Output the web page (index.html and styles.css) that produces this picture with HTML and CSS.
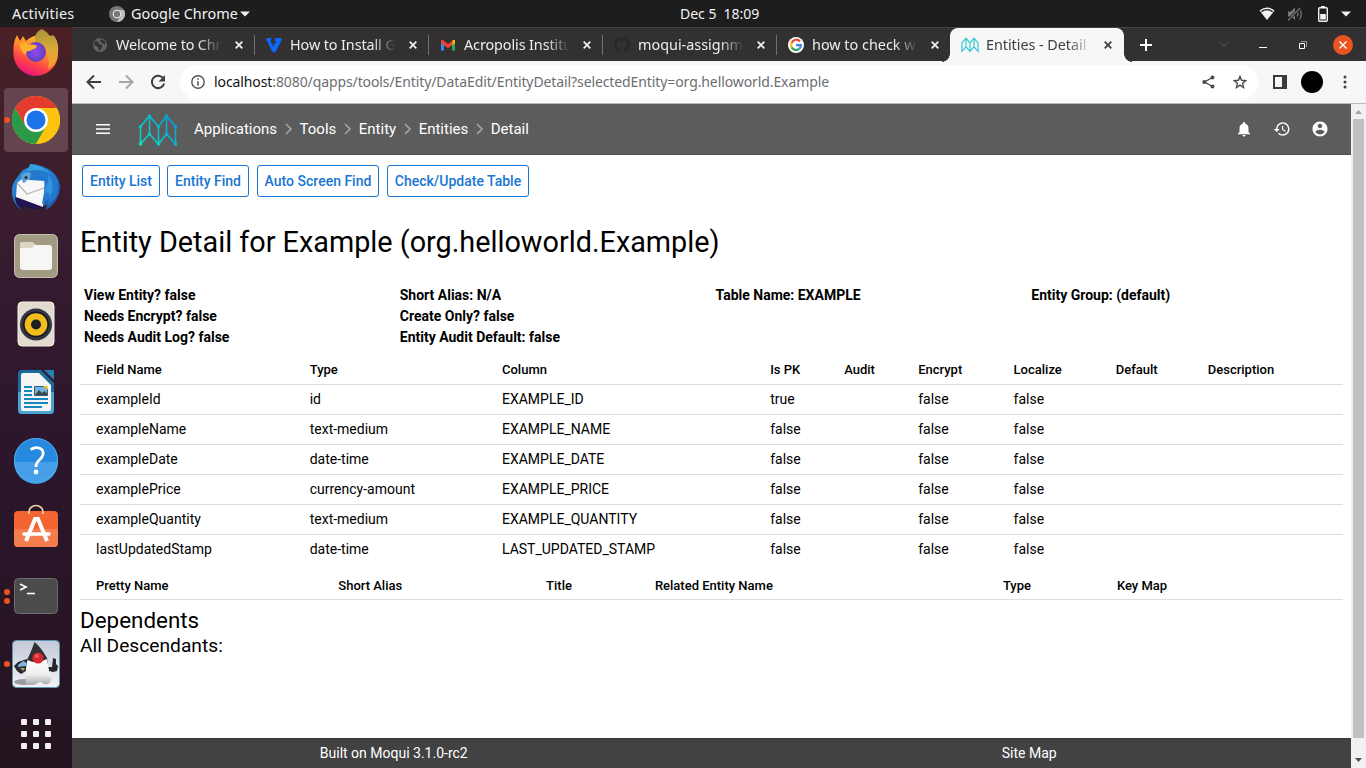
FILE: index.html
```html
<!DOCTYPE html>
<html lang="en">
<head>
<meta charset="utf-8">
<title>Entities - Detail</title>
<link rel="stylesheet" href="styles.css">
</head>
<body>
<div class="desktop">
  <header class="topbar">
    <span class="activities">Activities</span>
    <svg class="app-ico" width="16" height="16" viewBox="0 0 16 16"><circle cx="8" cy="8" r="8" fill="#777"/><path d="M8 4h7a8 8 0 0 1-7 12l3.5-6z" fill="#bdbdbd"/><circle cx="8" cy="8" r="4.3" fill="#eee"/><circle cx="8" cy="8" r="3.2" fill="#777"/></svg>
    <span class="app-name">Google Chrome</span>
    <svg class="app-caret" width="10" height="6" viewBox="0 0 10 6"><path d="M0 .5h10L5 5.5z" fill="#f2f2f2"/></svg>
    <span class="clock">Dec 5&nbsp; 18:09</span>
    <div class="tray">
      <svg width="16" height="14" viewBox="0 0 16 14"><path d="M.5 3.6Q8-2.6 15.500 3.600L8 13z" fill="#f2f2f2"/><path d="M2.400 4.600Q8 .6 13.600 4.600" fill="none" stroke="#1d1d1d" stroke-width="1.300"/></svg>
      <svg width="16" height="14" viewBox="0 0 16 14" fill="none" stroke="#777" stroke-width="1.300"><path d="M1 4.500h3l4-4v12.500L4 9.500H1z" fill="#777" stroke="none"/><path d="M10 4.500q2 2.500 0 5M12.500 2q3.500 5 0 10.500"/><path d="M1 13.500L13 1" stroke="#1d1d1d" stroke-width="2.600"/><path d="M1 13.500L13 1" stroke-width="1.100"/></svg>
      <svg width="10" height="16" viewBox="0 0 10 16"><path d="M3 0h4v2H3z" fill="#f2f2f2"/><rect x=".7" y="1.700" width="8.600" height="13.600" rx="1" fill="none" stroke="#f2f2f2" stroke-width="1.400"/><path d="M2.200 8h5.600v5.500H2.200z" fill="#f2f2f2"/></svg>
      <svg width="10" height="6" viewBox="0 0 10 6"><path d="M0 .5h10L5 5.500z" fill="#f2f2f2"/></svg>
    </div>
  </header>

  <div class="workspace">
    <nav class="dock">
      <div class="app"><svg width="48" height="48" viewBox="0 0 48 48">
        <defs><linearGradient id="ff" x1=".8" y1="0" x2=".3" y2="1"><stop offset="0" stop-color="#ffc43a"/><stop offset=".45" stop-color="#ff8a2a"/><stop offset=".72" stop-color="#ff404a"/><stop offset="1" stop-color="#e5127c"/></linearGradient><linearGradient id="fl" x1="0" y1="0" x2="0" y2="1"><stop offset="0" stop-color="#a8923a"/><stop offset=".5" stop-color="#d9ab38"/><stop offset="1" stop-color="#ff9a30"/></linearGradient><radialGradient id="fp"><stop offset="0" stop-color="#8e4cf0"/><stop offset="1" stop-color="#6540bd"/></radialGradient></defs>
        <path d="M5 7l3 6 3-5 3 5c5-5 12-7 18-4l10-1c3 4 5 10 4 16A22.300 22.300 0 0 1 1.500 27C1 19 2 12 5 7z" fill="url(#ff)"/>
        <path d="M30 1c3 2 5 3 8 7l3-1c5 6 6 15 4 22-1 6-5 10-9 12 2-8 1-18-4-24-3-2-7-3-9-4C22 8 25 3 30 1z" fill="url(#fl)"/>
        <circle cx="24" cy="24" r="10" fill="url(#fp)"/>
        <path d="M8 16c3-1 7-1 9 1 4-1 7 0 8 1-1 4-6 3-7 5-4 0-4 1-4 4-4-2-6-7-6-11z" fill="#ffb02e"/></svg></div>
      <div class="app app-current"><i class="run"></i><svg width="48" height="48" viewBox="0 0 48 48"><circle cx="24" cy="24" r="24" fill="#fbc116"/><path d="M24 12h20.800A24 24 0 0 0 3.200 12l10.400 18z" fill="#e33b2e"/><path d="M3.200 12A24 24 0 0 0 24 48l10.400-18H13.600z" fill="#2b9a48"/><path d="M34.400 30L24 48a24 24 0 0 0 20.800-36H24z" fill="#fdc40f"/><circle cx="24" cy="24" r="12" fill="#fff"/><circle cx="24" cy="24" r="9.500" fill="#1a73e8"/></svg></div>
      <div class="app"><svg width="48" height="48" viewBox="0 0 48 48">
        <defs><linearGradient id="tb" x1="0" y1="0" x2="1" y2="1"><stop offset="0" stop-color="#2f8fd6"/><stop offset=".6" stop-color="#1f6fc4"/><stop offset="1" stop-color="#2450a8"/></linearGradient></defs>
        <path d="M18 0c14 1 28 7 30 22 0 11-6 19-14 24l1-6-4 3 1-6L6 32l4 14C2 42-1 32 0 24c1-6 4-9 7-13 3-5 6-7 13-8z" fill="url(#tb)"/>
        <path d="M3 33l27 7 3 3c-3 0-6 2-10 2-4-1-8-1-11-4l-1 5C6 44 3 38 3 33z" fill="#201552"/>
        <path d="M5 19l6-5 7 2 15 1-2 26L4 33z" fill="#f8f8f8"/>
        <path d="M5 19l10 11 17-6" fill="none" stroke="#b4b4b4" stroke-width="1.200"/>
        <path d="M18 16c5-2 10-2 14 1 2 7-1 16-2 23l7-6-1 7 7-7c6-9 3-21-4-27-8-5-19-4-25 2z" fill="#2478cd"/>
        <path d="M34 22c3-4 3-7 2-11 6 6 6 15 1 23 1-6 0-7-4-4z" fill="#3395e2"/>
        <path d="M18 0c9 1 17 5 21 11-7-6-16-6-24-3z" fill="#35a0de"/>
        <path d="M9 13c1-4 5-6 10-4l-1 6c-3 0-4 4-7 4z" fill="#5aa4dc"/><circle cx="14" cy="13.500" r="1.500" fill="#3a2a22"/></svg></div>
      <div class="app"><svg width="48" height="48" viewBox="0 0 48 48"><rect x="2.500" y="2.500" width="43" height="43" rx="5" fill="#a39a83" stroke="#c5beac"/><path d="M8 13q0-3 3-3h9l4 3h13q3 0 3 3v19q0 3-3 3H11q-3 0-3-3z" fill="#f7f6f5"/><path d="M8 14v-1q0-3 3-3h9l3 3-3 3H8z" fill="#ddd5c6"/></svg></div>
      <div class="app"><svg width="48" height="48" viewBox="0 0 48 48"><rect x="6" y="2" width="36" height="44" rx="4" fill="#e1dccf" stroke="#f1ede4"/><circle cx="24" cy="24.500" r="16" fill="#343743"/><circle cx="24" cy="24.500" r="13" fill="#161920"/><circle cx="24" cy="24.500" r="11.300" fill="#f1bd1c"/><circle cx="24" cy="24.500" r="5" fill="#1c1e25"/></svg></div>
      <div class="app"><svg width="48" height="48" viewBox="0 0 48 48"><path d="M10 2h19l13 13v27q0 4-4 4H10q-4 0-4-4V6q0-4 4-4z" fill="#1c6b9c"/><path d="M6 24h36v18q0 4-4 4H10q-4 0-4-4z" fill="#4da3cf"/><path d="M32 2h10v10z" fill="#2581b5"/><path d="M11 5h16l12 12v24q0 2-2 2H11q-2 0-2-2V7q0-2 2-2z" fill="#f5f5f5"/><path d="M12 19h8M12 23h8M12 27h8M12 31h24M12 35h24M12 39h18" stroke="#1985bd" stroke-width="2"/><path d="M22.500 18.500h13v9h-13z" fill="#73b4dc" stroke="#246383"/><path d="M23 27l4-5 3 3 3-2 3 4z" fill="#444"/><path d="M31 18h5v4z" fill="#f8c528"/></svg></div>
      <div class="app"><svg width="48" height="48" viewBox="0 0 48 48"><circle cx="24" cy="24" r="22" fill="#2589df"/><path d="M2 26h44a22 22 0 0 1-44 0z" fill="#469ee7"/><circle cx="24" cy="24" r="21.500" fill="none" stroke="#4dadf0"/><path d="M18.500 13.500c7-4 13.500-1 12.500 5-1 6-7 5-7 12.500" fill="none" stroke="#fff" stroke-width="2.800"/><circle cx="24" cy="36" r="2.400" fill="#fff"/></svg></div>
      <div class="app"><svg width="48" height="48" viewBox="0 0 48 48"><rect x="2" y="7" width="44" height="36" rx="4" fill="#f26432"/><path d="M2 25h44v14q0 4-4 4H6q-4 0-4-4z" fill="#f47d4d"/><path d="M17 10V8a7 6.500 0 0 1 14 0v2" fill="none" stroke="#edd5a5" stroke-width="1.700"/><path d="M14 37l9-22h3l9 22" fill="none" stroke="#fff" stroke-width="4"/><path d="M12 30h25" stroke="#fff" stroke-width="3.600" stroke-linecap="round"/></svg></div>
      <div class="app"><i class="run run-hi"></i><i class="run run-lo"></i><svg width="48" height="48" viewBox="0 0 48 48"><rect x="2.500" y="6.500" width="43" height="35" rx="4" fill="#4b4b4b" stroke="#6d6d6d"/><path d="M8 12l6 3-6 3" fill="none" stroke="#fff" stroke-width="1.700"/><path d="M15 21.500h8" stroke="#fff" stroke-width="1.600"/></svg></div>
      <div class="app"><i class="run"></i><svg width="48" height="48" viewBox="0 0 48 48"><defs><linearGradient id="dk" x1="0" y1="0" x2="0" y2="1"><stop offset="0" stop-color="#c3c9d8"/><stop offset="1" stop-color="#f2f2f6"/></linearGradient><linearGradient id="du" x1="0" y1="0" x2="0" y2="1"><stop offset="0" stop-color="#fff"/><stop offset=".6" stop-color="#eee"/><stop offset="1" stop-color="#a9a9a9"/></linearGradient></defs><rect x=".5" y=".5" width="47" height="47" rx="4" fill="url(#dk)" stroke="#5b94ab"/><ellipse cx="12" cy="42" rx="10" ry="3" fill="#9a9aa0"/><path d="M2 26l4-4 9-3 1 5-2 7-5 3-4-3z" fill="#2b2b2b"/><path d="M6 25l5-4 4 2-1 3-8 1z" fill="#7cb4e4"/><path d="M8 28h5l-2 3z" fill="#b89a74"/><path d="M36 27h4l1-9 3 1v5l2 2-1 5-4 1-4-1z" fill="#292929"/><path d="M22.500 2c5 4 9 10 12.500 16l1 10-22 1 1-9c3-6 5-11 7.500-18z" fill="#303030"/><path d="M15.500 20q10 5 19-1c2 6 2 13 5 20-1 5-6 7-9 4-2-2-4-1-6 1-4 2-8 1-11-1 0-8 0-16 2-23z" fill="url(#du)"/><circle cx="26" cy="18" r="5.600" fill="#d82733"/><circle cx="25" cy="16" r="2" fill="#ef5a60"/></svg></div>
      <div class="app app-grid"><svg width="30" height="30" viewBox="0 0 30 30" fill="#f0efed"><rect width="6" height="6" rx="1"/><rect x="12" width="6" height="6" rx="1"/><rect x="24" width="6" height="6" rx="1"/><rect y="12" width="6" height="6" rx="1"/><rect x="12" y="12" width="6" height="6" rx="1"/><rect x="24" y="12" width="6" height="6" rx="1"/><rect y="24" width="6" height="6" rx="1"/><rect x="12" y="24" width="6" height="6" rx="1"/><rect x="24" y="24" width="6" height="6" rx="1"/></svg></div>
    </nav>

    <div class="window">
      <div class="tabs">
        <div class="tab"><svg width="16" height="16" viewBox="0 0 16 16"><circle cx="8" cy="8" r="7" fill="#5f6368"/><path d="M3 4q4 0 4 3l3 1v3l-3 3-1-4-4-2zM9 2l4 2v4l-3-2-2-2z" fill="#333031"/></svg><span class="t1">Welcome to Chr</span><svg class="x" width="8" height="8" viewBox="0 0 8 8"><path d="M.7.7l6.600 6.600M7.300.7L.7 7.300"/></svg></div>
        <div class="tab"><svg width="16" height="16" viewBox="0 0 16 16"><path d="M1.500 1h4l-1 5 2 0 0 4 4-6H8.500l1-3h5q1.500 0 1 2l-5.500 11q-2 3-4 0L.5 3q-.5-2 1-2z" fill="#0a69ff"/></svg><span class="t2">How to Install G</span><svg class="x" width="8" height="8" viewBox="0 0 8 8"><path d="M.7.7l6.600 6.600M7.300.7L.7 7.300"/></svg></div>
        <div class="tab"><svg width="16" height="16" viewBox="0 0 16 16"><path d="M1 4v9.500h3V6z" fill="#4285f4"/><path d="M15 4v9.500h-3V6z" fill="#34a853"/><path d="M12 4l1.500-1.200Q15 2.500 15 4v2l-3 2.200z" fill="#fbbc04"/><path d="M1 6V4q0-1.500 1.500-1.200L8 7l5-3.800-1 5-4 3-4-3z" fill="#ea4335"/></svg><span class="t3">Acropolis Institu</span><svg class="x" width="8" height="8" viewBox="0 0 8 8"><path d="M.7.7l6.600 6.600M7.300.7L.7 7.300"/></svg></div>
        <div class="tab"><svg width="16" height="16" viewBox="0 0 16 16"><path fill="#24292f" d="M8 0C3.580 0 0 3.580 0 8c0 3.540 2.290 6.530 5.470 7.590.4.070.55-.17.55-.38v-1.490c-2.010.37-2.530-.49-2.690-.94-.09-.23-.48-.94-.82-1.130-.28-.15-.68-.52-.01-.53.63-.01 1.080.58 1.230.82.72 1.210 1.870.87 2.330.66.070-.52.28-.87.51-1.070-1.780-.2-3.640-.89-3.640-3.950 0-.87.31-1.590.82-2.150-.08-.2-.36-1.020.08-2.120 0 0 .67-.21 2.200.82a7.500 7.500 0 0 1 4 0c1.530-1.040 2.200-.82 2.200-.82.44 1.100.16 1.920.08 2.120.51.56.82 1.270.82 2.150 0 3.070-1.870 3.750-3.650 3.950.29.25.54.73.54 1.480v2.200c0 .21.15.46.55.38A8 8 0 0 0 16 8c0-4.420-3.580-8-8-8z"/></svg><span class="t4">moqui-assignm</span><svg class="x" width="8" height="8" viewBox="0 0 8 8"><path d="M.7.7l6.600 6.600M7.300.7L.7 7.300"/></svg></div>
        <div class="tab last"><svg width="16" height="16" viewBox="0 0 16 16"><circle cx="8" cy="8" r="8" fill="#fff"/><g fill="none" stroke-width="2.200"><path d="M12 4.500A5 5 0 0 0 3.600 5.700" stroke="#ea4335"/><path d="M3.600 5.700a5 5 0 0 0 0 4.600" stroke="#fbbc05"/><path d="M3.600 10.300a5 5 0 0 0 7.400 1.700" stroke="#34a853"/><path d="M11 12a5 5 0 0 0 1.900-3.800H8" stroke="#4285f4"/></g></svg><span class="t5">how to check w</span><svg class="x" width="8" height="8" viewBox="0 0 8 8"><path d="M.7.7l6.600 6.600M7.300.7L.7 7.300"/></svg></div>
        <div class="tab active"><svg width="18" height="16" viewBox="0 0 40 32" fill="none" stroke="#28c5d3" stroke-width="2.500"><path d="M2 30V12L11 1l9 11 9-11 9 11v18L29 20l-9 10-9-10zM11 1v19M20 12v18M29 1v19"/></svg><span class="t6">Entities - Detail</span><svg class="x" width="8" height="8" viewBox="0 0 8 8"><path d="M.7.7l6.600 6.600M7.300.7L.7 7.300"/></svg></div>
        <svg class="plus" width="12" height="12" viewBox="0 0 12 12"><path d="M6 0v12M0 6h12" stroke="#fff" stroke-width="2"/></svg>
        <div class="controls">
          <svg width="10" height="6" viewBox="0 0 10 6"><path d="M1 .5l4 4 4-4" fill="none" stroke="#484446" stroke-width="1.500"/></svg>
          <svg width="8" height="8" viewBox="0 0 8 8"><path d="M0 6.500h8" stroke="#fff"/></svg>
          <svg width="8" height="8" viewBox="0 0 8 8" fill="none"><path d="M2 .5h5.500V6" stroke="#999"/><path d="M.5 2.500h5v5h-5z" stroke="#fff"/></svg>
          <svg width="20" height="20" viewBox="0 0 20 20"><circle cx="10" cy="10" r="10" fill="#e95420"/><path d="M6.500 6.500l7 7M13.500 6.500l-7 7" stroke="#fff" stroke-width="1.400"/></svg>
        </div>
      </div>

      <div class="toolbar">
        <svg width="16" height="16" viewBox="0 0 16 16" fill="none" stroke="#3c4043" stroke-width="2"><path d="M15 8H2M8 1.500L1.500 8 8 14.500"/></svg>
        <svg width="16" height="16" viewBox="0 0 16 16" fill="none" stroke="#a6a6a6" stroke-width="2"><path d="M1 8h13M8 1.500L14.500 8 8 14.500"/></svg>
        <svg width="16" height="16" viewBox="0 0 16 16" fill="none" stroke="#3c4043" stroke-width="2"><path d="M13.300 4.500a6.200 6.200 0 1 0 .8 5"/><path d="M15 1v6.500H8.500z" fill="#3c4043" stroke="none"/></svg>
        <div class="omnibox">
          <svg width="14" height="14" viewBox="0 0 14 14" fill="none" stroke="#505458" stroke-width="1.400"><circle cx="7" cy="7" r="6.200"/><path d="M7 6.200v4.300M7 3.300v1.500" stroke-width="1.600"/></svg>
          <span class="url"><b>localhost</b>:8080/qapps/tools/Entity/DataEdit/EntityDetail?selectedEntity=org.helloworld.Example</span>
          <svg class="share" width="13" height="14" viewBox="0 0 13 14" fill="#484b4e"><path d="M10.500 2.500L2.500 7l8 4.500" fill="none" stroke="#484b4e" stroke-width="1.400"/><circle cx="10.500" cy="2.500" r="2"/><circle cx="2.300" cy="7" r="2"/><circle cx="10.500" cy="11.500" r="2"/></svg>
          <svg class="star" width="14" height="14" viewBox="0 0 14 14"><path d="M7 1.400l1.600 3.900 4.200.3-3.200 2.700 1 4.200L7 10.200l-3.600 2.300 1-4.200L1.200 5.600l4.200-.3z" fill="none" stroke="#484b4e" stroke-width="1.400"/></svg>
        </div>
        <svg class="panel" width="14" height="14" viewBox="0 0 14 14"><path d="M0 0h14v14H0z" fill="#3b3b3e"/><path d="M2 2h7v10H2z" fill="#f7f7f7"/></svg>
        <i class="avatar"></i>
        <svg class="dots" width="4" height="14" viewBox="0 0 4 14" fill="#3c4043"><circle cx="2" cy="2" r="1.500"/><circle cx="2" cy="7" r="1.500"/><circle cx="2" cy="12" r="1.500"/></svg>
      </div>

      <div class="viewport">
        <div class="page">
          <div class="appbar">
            <svg class="menu" width="14" height="10" viewBox="0 0 14 10"><path d="M0 .8h14M0 5h14M0 9.200h14" stroke="#fff" stroke-width="1.500"/></svg>
            <svg class="logo" width="40" height="32" viewBox="0 0 40 32"><defs><linearGradient id="lg" gradientUnits="userSpaceOnUse" x1="2" y1="30" x2="34" y2="2"><stop offset="0" stop-color="#05e6c4"/><stop offset="1" stop-color="#079cdc"/></linearGradient></defs><path d="M2.500 30V12.500L11.500 2l9 10.500L28.500 2l9 10.500V30l-9-10-8 10-9-10-9 10M11.500 2v18M20.500 12.500V30M28.500 2v18" fill="none" stroke="url(#lg)" stroke-width="1.500"/><g fill="url(#lg)"><circle cx="2.500" cy="30" r="1.800"/><circle cx="2.500" cy="12.500" r="1.600"/><circle cx="11.500" cy="2" r="1.700"/><circle cx="11.500" cy="20" r="1.600"/><circle cx="20.500" cy="12.500" r="1.600"/><circle cx="20.500" cy="30" r="1.800"/><circle cx="28.500" cy="2" r="1.800"/><circle cx="28.500" cy="20" r="1.600"/><circle cx="37.500" cy="12.500" r="1.800"/><circle cx="37.500" cy="30" r="1.800"/></g></svg>
            <div class="crumbs">
              <span>Applications</span><svg width="8" height="12" viewBox="0 0 8 12"><path d="M1 1l5 5-5 5"/></svg>
              <span>Tools</span><svg width="8" height="12" viewBox="0 0 8 12"><path d="M1 1l5 5-5 5"/></svg>
              <span>Entity</span><svg width="8" height="12" viewBox="0 0 8 12"><path d="M1 1l5 5-5 5"/></svg>
              <span>Entities</span><svg width="8" height="12" viewBox="0 0 8 12"><path d="M1 1l5 5-5 5"/></svg>
              <span>Detail</span>
            </div>
            <div class="actions">
              <svg width="18" height="18" viewBox="0 0 24 24" fill="#fff"><path d="M12 22c1.100 0 2-.9 2-2h-4c0 1.100.89 2 2 2zm6-6v-5c0-3.070-1.640-5.640-4.500-6.320V4c0-.83-.67-1.500-1.500-1.500s-1.500.67-1.500 1.500v.68C7.630 5.360 6 7.920 6 11v5l-2 2v1h16v-1l-2-2z"/></svg>
              <svg width="18" height="18" viewBox="0 0 24 24" fill="#fff"><path d="M13 3a9 9 0 0 0-9 9H1l3.890 3.890.07.14L9 12H6c0-3.870 3.130-7 7-7s7 3.130 7 7-3.130 7-7 7c-1.930 0-3.680-.79-4.940-2.060l-1.420 1.420A8.954 8.954 0 0 0 13 21a9 9 0 0 0 0-18zm-1 5v5l4.280 2.540.72-1.210-3.500-2.080V8H12z"/></svg>
              <svg width="18" height="18" viewBox="0 0 24 24" fill="#fff"><path d="M12 2C6.480 2 2 6.480 2 12s4.480 10 10 10 10-4.480 10-10S17.520 2 12 2zm0 3c1.660 0 3 1.340 3 3s-1.340 3-3 3-3-1.340-3-3 1.340-3 3-3zm0 14.200c-2.500 0-4.710-1.280-6-3.220.03-1.990 4-3.080 6-3.080 1.990 0 5.970 1.090 6 3.080-1.290 1.940-3.500 3.220-6 3.220z"/></svg>
            </div>
          </div>

          <main class="content">
            <div class="buttons"><a class="w1">Entity List</a><a class="w2">Entity Find</a><a class="w3">Auto Screen Find</a><a class="w4">Check/Update Table</a></div>
            <h1>Entity Detail for Example (org.helloworld.Example)</h1>
            <div class="facts">
              <span>View Entity? false</span><span>Short Alias: N/A</span><span>Table Name: EXAMPLE</span><span>Entity Group: (default)</span>
              <span>Needs Encrypt? false</span><span>Create Only? false</span><span></span><span></span>
              <span>Needs Audit Log? false</span><span>Entity Audit Default: false</span>
            </div>
            <div class="fields">
              <div class="row head"><span>Field Name</span><span>Type</span><span>Column</span><span>Is PK</span><span>Audit</span><span>Encrypt</span><span>Localize</span><span>Default</span><span>Description</span></div>
              <div class="row"><span>exampleId</span><span>id</span><span>EXAMPLE_ID</span><span>true</span><span></span><span>false</span><span>false</span></div>
              <div class="row"><span>exampleName</span><span>text-medium</span><span>EXAMPLE_NAME</span><span>false</span><span></span><span>false</span><span>false</span></div>
              <div class="row"><span>exampleDate</span><span>date-time</span><span>EXAMPLE_DATE</span><span>false</span><span></span><span>false</span><span>false</span></div>
              <div class="row"><span>examplePrice</span><span>currency-amount</span><span>EXAMPLE_PRICE</span><span>false</span><span></span><span>false</span><span>false</span></div>
              <div class="row"><span>exampleQuantity</span><span>text-medium</span><span>EXAMPLE_QUANTITY</span><span>false</span><span></span><span>false</span><span>false</span></div>
              <div class="row"><span>lastUpdatedStamp</span><span>date-time</span><span>LAST_UPDATED_STAMP</span><span>false</span><span></span><span>false</span><span>false</span></div>
            </div>
            <div class="relations row head"><span>Pretty Name</span><span>Short Alias</span><span>Title</span><span>Related Entity Name</span><span>Type</span><span>Key Map</span></div>
            <h2>Dependents</h2>
            <h3>All Descendants:</h3>
          </main>
          <footer class="footer"><span>Built on Moqui 3.1.0-rc2</span><span>Site Map</span></footer>
        </div>
        <div class="scrollbar">
          <svg width="7" height="4" viewBox="0 0 7 4"><path d="M0 4l3.500-4L7 4z" fill="#a3a3a3"/></svg>
          <i class="thumb"></i>
          <svg width="7" height="4" viewBox="0 0 7 4"><path d="M0 0l3.500 4L7 0z" fill="#505050"/></svg>
        </div>
      </div>
    </div>
  </div>
</div>
</body>
</html>
```
FILE: styles.css
```css
* { box-sizing: border-box; }
body { margin: 0; font-family: Roboto, sans-serif; color: #000; }
svg { display: block; flex: none; }
.desktop { width: 1366px; height: 768px; overflow: hidden; display: flex; flex-direction: column; }
.topbar { height: 27px; background: #1d1d1d; color: #f2f2f2; display: flex; align-items: center; font: 14.4px/27px "Noto Sans", sans-serif; position: relative; white-space: nowrap; }
.activities { width: 97px; padding-left: 12px; letter-spacing: .25px; }
.app-ico { margin-left: 12px; }
.app-name { margin-left: 6px; width: 104px; letter-spacing: .05px; }
.app-caret { margin-left: 5px; }
.clock { position: absolute; left: 680px; font-size: 14px; letter-spacing: -.02px; }
.tray { margin-left: auto; padding-right: 15px; display: flex; align-items: center; }
.tray svg:nth-child(2) { margin-left: 12px; }
.tray svg:nth-child(3) { margin-left: 15px; }
.tray svg:nth-child(4) { margin-left: 13px; }

.workspace { flex: 1; display: flex; min-height: 0; }
.dock { width: 72px; flex: none; background: linear-gradient(#4a2024 0, #40202c 100px, #351a2f 250px, #2c162c 420px, #24141f 741px); padding-left: 4px; overflow: hidden; }
.app { width: 64px; height: 64px; margin-bottom: 4px; display: flex; align-items: center; justify-content: center; position: relative; border-radius: 4px; }
.app:first-child { margin-top: -7px; }
.app-current { background: #64444e; }
.run { position: absolute; left: 0; top: 29px; width: 6px; height: 6px; border-radius: 50%; background: #e95420; }
.run-hi { top: 25px; }
.run-lo { top: 34px; }
.app-grid { padding-top: 4px; }

.window { flex: 1; min-width: 0; display: flex; flex-direction: column; }
.tabs { height: 34px; flex: none; background: #333031; border-top: 1px solid #454243; display: flex; align-items: center; padding-left: 9px; }
.tab { width: 174px; height: 34px; display: flex; align-items: center; padding: 0 11px; position: relative; font: 14.4px/34px "Noto Sans", sans-serif; color: #eeeded; }
.tab::after { content: ""; position: absolute; right: 0; top: 7px; width: 1px; height: 20px; background: #716f70; }
.tab.last { width: 173px; }
.tab.last::after { display: none; }
.tab span { width: 112px; margin-left: 8px; overflow: hidden; white-space: nowrap; -webkit-mask-image: linear-gradient(90deg, #000 82px, transparent 106px); mask-image: linear-gradient(90deg, #000 82px, transparent 106px); }
.tab .x { margin-left: 7px; stroke: #eeeded; stroke-width: 1.8; }
.tab.active { background: #f7f7f7; color: #3c4043; border-radius: 8px 8px 0 0; }
.tab.active span { margin-left: 7px; letter-spacing: -.05px; }
.tab.active .x { stroke: #3c4043; margin-left: 6px; }
.tab.active::after, .tab.active::before { content: ""; position: absolute; top: auto; bottom: 0; width: 8px; height: 8px; }
.tab.active::before { left: -8px; background: radial-gradient(circle at 0 0, #333031 7.5px, #f7f7f7 8px); }
.tab.active::after { right: -8px; background: radial-gradient(circle at 100% 0, #333031 7.5px, #f7f7f7 8px); }
.tab .t1 { letter-spacing: -.15px; }
.tab .t2, .tab .t3 { letter-spacing: -.1px; }
.plus { margin-left: 16px; }
.controls { margin-left: auto; padding-right: 13px; display: flex; align-items: center; }
.controls svg:nth-child(2) { margin-left: 30px; }
.controls svg:nth-child(3) { margin-left: 32px; }
.controls svg:nth-child(4) { margin-left: 26px; }

.toolbar { height: 43px; flex: none; background: #f7f7f7; border-bottom: 1px solid #b8bbb9; display: flex; align-items: center; padding-left: 14px; }
.toolbar > svg:nth-child(2), .toolbar > svg:nth-child(3) { margin-left: 16px; }
.omnibox { margin-left: 14px; width: 1078px; height: 34px; border-radius: 17px; background: #fff; display: flex; align-items: center; padding-left: 11px; }
.url { margin-left: 9px; width: 616px; white-space: nowrap; font: 14px/34px "Noto Sans", sans-serif; letter-spacing: -.1px; color: #6c6e71; }
.url b { font-weight: 400; color: #111; }
.share { margin-left: 372px; }
.star { margin-left: 18px; }
.toolbar .panel { margin-left: 15px; }
.avatar { width: 22px; height: 22px; border-radius: 50%; background: #000; margin-left: 14px; }
.dots { margin-left: 20px; }

.viewport { flex: 1; display: flex; min-height: 0; }
.page { width: 1279px; display: flex; flex-direction: column; background: #fff; }
.appbar { height: 51px; flex: none; background: #5c5c5c; border-bottom: 1px solid #4d4d4d; display: flex; align-items: center; color: #fff; padding-left: 24px; }
.logo { margin: 2px 0 0 28px; }
.crumbs { margin-left: 16px; display: flex; align-items: center; font-size: 15px; line-height: 20px; }
.crumbs svg { margin: 0 6.6px 0 7.9px; fill: none; stroke: #a4a4a4; stroke-width: 1.7; }
.actions { margin-left: auto; padding-right: 22px; display: flex; gap: 20px; }
.content { flex: 1; padding: 10px 8px 0; }
.buttons { display: flex; padding-left: 2px; }
.buttons a { height: 32px; border: 1px solid #1976d2; border-radius: 3px; color: #1976d2; font: 500 14px/30px Roboto, sans-serif; text-align: center; white-space: nowrap; }
.w1 { width: 78px; margin-right: 7px; }
.w2 { width: 82px; margin-right: 8px; }
.w3 { width: 122px; margin-right: 8px; }
.w4 { width: 142px; }
h1, h2, h3 { margin: 0; font-weight: 400; }
h1 { margin-top: 25px; font-size: 28.8px; line-height: 40px; }
.facts { margin-top: 23px; padding-left: 4px; display: grid; grid-template-columns: repeat(3, 315.75px) auto; grid-auto-rows: 21px; font: 700 14px/21px Roboto, sans-serif; }
.row { height: 30px; display: grid; grid-template-columns: 213.700px 192.300px 268.2px 74px 74px 95.400px 102.200px 92px auto; padding-left: 16px; border-bottom: 1px solid #dedede; font-size: 14px; line-height: 29px; white-space: nowrap; }
.row:last-child { border-bottom: 0; }
.fields { margin-top: 7px; }
.head { font: 500 13px/30px Roboto, sans-serif; }
.relations { height: 28px; line-height: 28px; margin-top: 7px; grid-template-columns: 242.300px 207.800px 108.800px 348px 114px auto; }
h2 { margin-top: 4px; font-size: 22.4px; line-height: 32px; }
h3 { font-size: 19.2px; line-height: 20px; }
.footer { height: 30px; flex: none; background: #424242; border-top: 1px solid #383838; color: #fff; font-size: 14px; line-height: 29px; display: grid; grid-template-columns: 1fr 1fr; text-align: center; }
.footer span:first-child { padding-left: 4px; }
.footer span:last-child { padding-right: 4px; }
.scrollbar { width: 15px; background: #f1f1f1; display: flex; flex-direction: column; align-items: center; padding: 6px 0 6px; }
.thumb { width: 11px; height: 619px; margin: 5px 0 auto; background: #c1c1c1; }
```
